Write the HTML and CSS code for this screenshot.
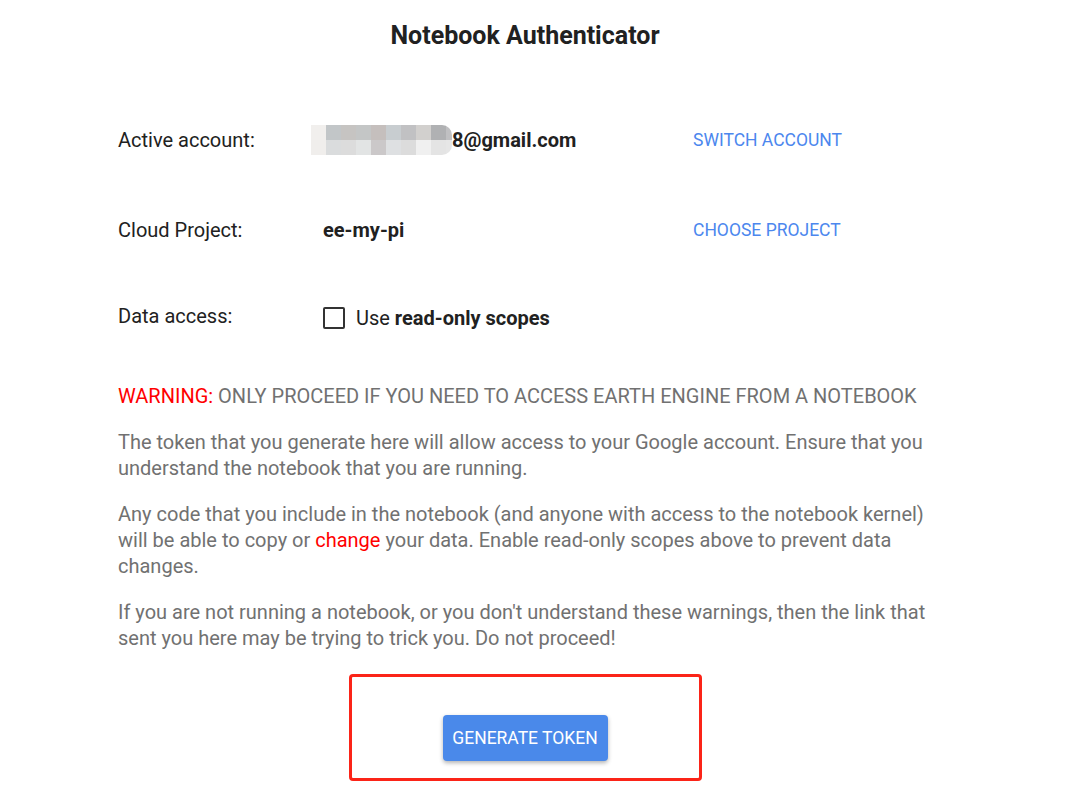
FILE: index.html
```html
<!DOCTYPE html>
<html lang="en">
<head>
    <meta charset="UTF-8">
    <meta name="viewport" content="width=device-width, initial-scale=1.0">
    <title>Notebook Authenticator</title>
    <link rel="stylesheet" href="styles.css">
</head>
<body>
    <div class="container">
        <h1>Notebook Authenticator</h1>

        <div class="settings">
            <div class="row">
                <div class="label">Active account:</div>
                <div class="value">
                    <span class="mosaic">
                        <i style="background:#f1efed"></i><i style="background:#c2c6c8"></i><i style="background:#c6c4c2"></i><i style="background:#c4c6c6"></i><i style="background:#c5bfbd"></i><i style="background:#c8cdd0"></i><i style="background:#c1c1c3"></i><i style="background:#d2d0ce"></i><i style="background:#b0b1b3"></i><i style="background:#c0c0c2"></i>
                        <i style="background:#f0eeec"></i><i style="background:#dadcdd"></i><i style="background:#dcdcdc"></i><i style="background:#e2e4e4"></i><i style="background:#cbc8c9"></i><i style="background:#dee0e2"></i><i style="background:#dcdcdc"></i><i style="background:#f0f0f0"></i><i style="background:#e4e4e4"></i><i style="background:#e6e6e6"></i>
                    </span><span class="email">8@gmail.com</span>
                </div>
                <a class="action" href="#">SWITCH ACCOUNT</a>
            </div>

            <div class="row">
                <div class="label">Cloud Project:</div>
                <div class="value">ee-my-pi</div>
                <a class="action" href="#">CHOOSE PROJECT</a>
            </div>

            <div class="row">
                <div class="label">Data access:</div>
                <label class="scope">
                    <input type="checkbox">
                    <span class="box"></span>
                    <span>Use <b>read-only scopes</b></span>
                </label>
            </div>
        </div>

        <div class="warnings">
            <p><span class="red">WARNING:</span> ONLY PROCEED IF YOU NEED TO ACCESS EARTH ENGINE FROM A NOTEBOOK</p>
            <p>The token that you generate here will allow access to your Google account. Ensure that you understand the notebook that you are running.</p>
            <p>Any code that you include in the notebook (and anyone with access to the notebook kernel) will be able to copy or <span class="red">change</span> your data. Enable read-only scopes above to prevent data changes.</p>
            <p>If you are not running a notebook, or you don't understand these warnings, then the link that sent you here may be trying to trick you. Do not proceed!</p>
        </div>

        <div class="highlight">
            <button type="button">GENERATE TOKEN</button>
        </div>
    </div>
</body>
</html>
```

FILE: styles.css
```css
* {
    margin: 0;
    padding: 0;
    box-sizing: border-box;
}

body {
    font-family: Roboto, "Liberation Sans", Arial, sans-serif;
    background: #fff;
    color: #212121;
}

.container {
    width: 814px;
    margin-left: 118px;
    padding-top: 21px;
}

h1 {
    font-size: 25px;
    line-height: 30px;
    font-weight: 700;
    text-align: center;
    color: #212121;
}

/* account / project / scopes rows */
.settings {
    margin-top: 74px;
    display: flex;
    flex-direction: column;
    gap: 60px;
}

.row {
    display: grid;
    grid-template-columns: 205px 370px auto;
    align-items: center;
    height: 30px;
}

.row:last-child {
    margin-top: -4px;
}

.label {
    font-size: 20px;
}

.value {
    font-size: 20px;
    font-weight: 700;
    display: flex;
    align-items: center;
}

.mosaic {
    display: grid;
    grid-template-columns: repeat(9, 15px) 6px;
    grid-template-rows: 15px 15px;
    margin-left: -12px;
    border-radius: 0 10px 10px 0;
    overflow: hidden;
}

.mosaic i {
    display: block;
}

.action {
    font-size: 17.5px;
    color: #4c87ee;
    text-decoration: none;
}

.scope {
    display: flex;
    align-items: center;
    gap: 11px;
    font-size: 20px;
    padding-top: 4px;
}

.scope input {
    display: none;
}

.scope .box {
    width: 22px;
    height: 22px;
    border: 2px solid #333;
    border-radius: 2px;
}

/* warning text */
.warnings {
    margin-top: 52px;
    color: #717171;
    font-size: 20px;
    line-height: 26px;
}

.warnings p {
    margin-bottom: 20px;
}

.red {
    color: #f00;
}

.highlight {
    width: 353px;
    height: 107px;
    margin: 23px auto 0;
    border: 3px solid #fb2418;
    border-radius: 4px;
    display: flex;
    justify-content: center;
    padding-top: 38px;
}

button {
    width: 165px;
    height: 46px;
    background: #4a89ea;
    color: #fff;
    border: none;
    border-radius: 4px;
    font-family: Roboto, sans-serif;
    font-size: 17.5px;
    box-shadow: 0 2px 4px rgba(0, 0, 0, 0.3);
    cursor: pointer;
}
```
